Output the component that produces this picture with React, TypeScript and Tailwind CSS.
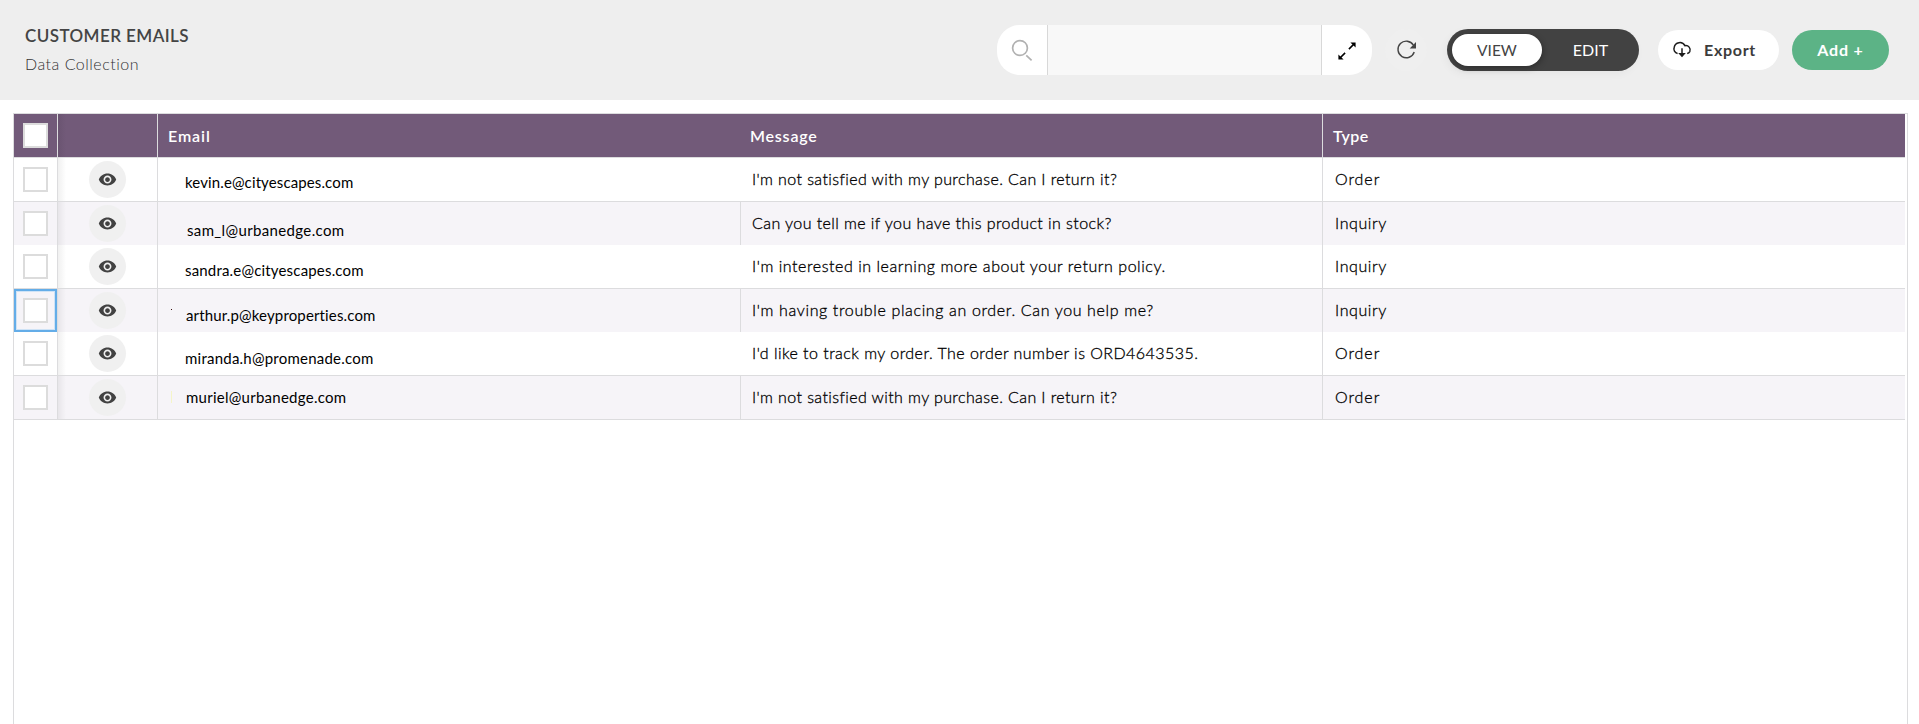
import { MdVisibility } from "react-icons/md";

type Row = {
  email: string;
  emailClass: string;
  message: string;
  messageClass: string;
  type: string;
  typeClass: string;
  mark?: string;
};

const rows: Row[] = [
  {
    email: "kevin.e@cityescapes.com",
    emailClass: "pl-[27px] pt-[6px] tracking-[0.12px]",
    message: "I'm not satisfied with my purchase. Can I return it?",
    messageClass: "tracking-[0.4px]",
    type: "Order",
    typeClass: "tracking-[0.95px]",
  },
  {
    email: "sam_l@urbanedge.com",
    emailClass: "pl-[29px] pt-[14px] tracking-[0.36px]",
    message: "Can you tell me if you have this product in stock?",
    messageClass: "tracking-[0.43px]",
    type: "Inquiry",
    typeClass: "tracking-[0.6px]",
  },
  {
    email: "sandra.e@cityescapes.com",
    emailClass: "pl-[27px] pt-[8px] tracking-[0.18px]",
    message: "I'm interested in learning more about your return policy.",
    messageClass: "tracking-[0.55px]",
    type: "Inquiry",
    typeClass: "tracking-[0.6px]",
  },
  {
    email: "arthur.p@keyproperties.com",
    emailClass: "pl-[28px] pt-[10px] tracking-[0.15px]",
    message: "I'm having trouble placing an order. Can you help me?",
    messageClass: "tracking-[0.64px]",
    type: "Inquiry",
    typeClass: "tracking-[0.6px]",
    mark: "top-[20px] h-px bg-[#3a1010]",
  },
  {
    email: "miranda.h@promenade.com",
    emailClass: "pl-[27px] pt-[10px] tracking-[0.23px]",
    message: "I'd like to track my order. The order number is ORD4643535.",
    messageClass: "tracking-[0.46px]",
    type: "Order",
    typeClass: "tracking-[0.95px]",
  },
  {
    email: "muriel@urbanedge.com",
    emailClass: "pl-[28px] tracking-[0.26px]",
    message: "I'm not satisfied with my purchase. Can I return it?",
    messageClass: "tracking-[0.4px]",
    type: "Order",
    typeClass: "tracking-[0.95px]",
    mark: "top-[15px] h-[12px] bg-[#f5f5c8]",
  },
];

const rowGrid = "grid grid-cols-[44px_100px_583px_582px_582px] border-[#dcdcde]";
const bookText = "font-light [-webkit-text-stroke:0.3px_#000]";

function Checkbox() {
  return <span className="block size-[25px] border-2 border-[#dcdcdc] bg-white" />;
}

function SearchIcon() {
  return (
    <svg width="24" height="24" viewBox="0 0 24 24" fill="none" stroke="#b1b1b1" strokeWidth="1.7">
      <circle cx="10" cy="10" r="7.4" />
      <path d="M16.3 17.3 21.6 22.4" />
    </svg>
  );
}

function ExpandIcon() {
  return (
    <svg width="20" height="20" viewBox="0 0 20 20" fill="#000">
      <path d="M18.6 1.4v5.2L13.4 1.4zM1.4 18.6v-5.2l5.2 5.2z" />
      <path d="M17 3 11.9 8.1M3 17 8.1 11.9" stroke="#000" strokeWidth="1.6" />
    </svg>
  );
}

function RefreshIcon() {
  return (
    <svg width="22" height="22" viewBox="0 0 22 22" fill="none">
      <path d="M17.4 6.2A8.3 8.3 0 1 0 18.2 13" stroke="#444" strokeWidth="1.4" />
      <path d="M20 3v6.5h-6.3z" fill="#444" />
    </svg>
  );
}

function CloudDownIcon() {
  return (
    <svg width="20" height="18" viewBox="0 0 20 18" fill="none" stroke="#1c1c1c" strokeWidth="1.5">
      <path d="M5.6 12.4A4.4 4.4 0 0 1 2.2 6.4 5.7 5.7 0 0 1 12.9 4.7 4.3 4.3 0 0 1 17.8 10.6 3.6 3.6 0 0 1 15.2 12.4" />
      <path d="M10 7.2v7" />
      <path d="M6.2 11.9h7.6L10 16.3z" fill="#1c1c1c" stroke="none" />
    </svg>
  );
}

export default function App() {
  return (
    <div className="flex h-[724px] w-full flex-col overflow-hidden bg-white font-['Lato',sans-serif] text-black">
      <header className="flex h-[100px] shrink-0 items-start justify-between bg-[#eee] pr-[30px] pl-[25px]">
        <div className="pt-[26px]">
          <h1 className="text-[17px] leading-5 font-semibold tracking-[0.43px] text-[#444]">CUSTOMER EMAILS</h1>
          <p className="mt-[8px] text-base leading-5 font-light tracking-[0.5px] text-[#333]">Data Collection</p>
        </div>
        <div className="flex h-[100px] items-center">
          <div className="flex h-[50px] w-[375px] overflow-hidden rounded-[23px] bg-white">
            <span className="w-[50px] pt-[13px] pl-[13px]">
              <SearchIcon />
            </span>
            <span className="flex-1 border-x border-[#d8d8d8] bg-[#f8f8f8]" />
            <span className="flex w-[50px] items-center justify-center pt-px">
              <ExpandIcon />
            </span>
          </div>
          <span className="ml-[13px] flex size-[42px] items-center justify-center rounded-full bg-[#efefef] pl-[2px]">
            <RefreshIcon />
          </span>
          <div className="ml-5 flex h-[42px] w-[192px] items-center rounded-full bg-[#424242] p-[5px] text-base leading-5 shadow-[-2px_3px_8px_rgba(0,0,0,0.04)]">
            <span className="flex h-8 w-[90px] items-center justify-center rounded-full bg-white pb-px text-[15.5px] text-[#444] shadow-[1px_2px_6px_rgba(0,0,0,0.3)]">
              VIEW
            </span>
            <span className="flex-1 pb-px pl-[5px] text-center text-white">EDIT</span>
          </div>
          <button className="ml-[19px] flex h-10 w-[121px] items-center rounded-full bg-white pl-[14px] text-base font-bold tracking-[0.7px] text-[#3c3c3c]">
            <CloudDownIcon />
            <span className="ml-[12px]">Export</span>
          </button>
          <button className="ml-[13px] h-10 w-[97px] rounded-full bg-[#5cb386] text-base font-bold tracking-[0.8px] text-white">
            Add +
          </button>
        </div>
      </header>

      <main className="mt-[13px] ml-[13px] w-[1895px] flex-1 border border-b-0 border-[#dcdcde]">
        <div className={`${rowGrid} h-[44px] w-[1891px] border-b bg-[#725a79] text-[16px] font-semibold text-white`}>
          <div className="flex items-center justify-center border-r border-[#dcdcde]">
            <Checkbox />
          </div>
          <div className="border-r border-[#dcdcde] bg-linear-to-r from-[#6a5471] to-[#725a79] to-8%" />
          <div className="flex items-center pt-px pl-[10px] tracking-[0.9px]">Email</div>
          <div className="flex items-center border-r border-[#dcdcde] pt-px pl-[9px] tracking-[0.8px]">Message</div>
          <div className="flex items-center pt-px pl-[10px] tracking-[0.4px]">Type</div>
        </div>
        {rows.map((row, i) => {
          const ruled = i % 2 === 0 || i === rows.length - 1;
          const shaded = i % 2 === 1;
          return (
            <div
              key={row.email}
              className={`${rowGrid} w-[1891px] ${ruled ? "h-[44px] border-b" : "h-[43px]"} ${shaded ? "bg-[#f6f4f8]" : "bg-white"}`}
            >
              <div className="relative flex items-center justify-center border-r border-[#dcdcde]">
                <Checkbox />
                {i === 3 && <span className="absolute inset-0 border-2 border-[#64ade8] shadow-[inset_0_0_0_1px_#cfe3f6]" />}
              </div>
              <div className="flex items-center justify-center border-r border-[#dcdcde] bg-linear-to-r from-black/6 to-transparent to-8%">
                <span className="flex size-[37px] items-center justify-center rounded-full bg-[#f0f0f0]">
                  <MdVisibility className="size-[19px] text-[#424242]" />
                </span>
              </div>
              <div className={`relative flex items-center text-[15px] ${shaded ? "border-r border-[#dcdcde]" : ""} ${row.emailClass}`}>
                {row.mark && <span className={`absolute left-[13px] w-px ${row.mark}`} />}
                {row.email}
              </div>
              <div className={`flex items-center border-r border-[#dcdcde] pb-[2px] pl-[11px] ${bookText} ${row.messageClass}`}>
                {row.message}
              </div>
              <div className={`flex items-center pb-[2px] pl-[12px] ${bookText} ${row.typeClass}`}>{row.type}</div>
            </div>
          );
        })}
      </main>
    </div>
  );
}
